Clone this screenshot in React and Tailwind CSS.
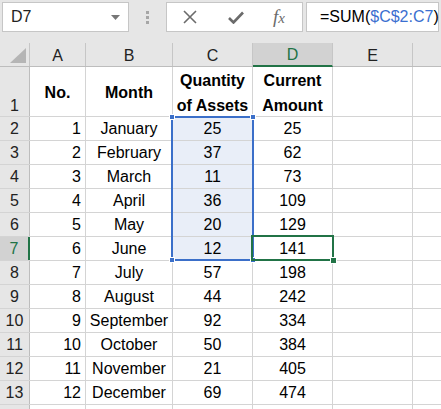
import React from "react";

const rows = [
  [1, "January", 25, 25],
  [2, "February", 37, 62],
  [3, "March", 11, 73],
  [4, "April", 36, 109],
  [5, "May", 20, 129],
  [6, "June", 12, 141],
  [7, "July", 57, 198],
  [8, "August", 44, 242],
  [9, "September", 92, 334],
  [10, "October", 50, 384],
  [11, "November", 21, 405],
  [12, "December", 69, 474],
];

const font = { fontFamily: '"Liberation Sans", Arial, sans-serif' };

function Handle({ className }) {
  return <div className={`absolute w-[6px] h-[6px] bg-[#3b6fc9] border border-white ${className}`} />;
}

export default function App() {
  return (
    <div className="w-[441px] h-[409px] overflow-hidden bg-white text-black" style={font}>
      {/* formula bar */}
      <div className="h-[43px] bg-[#e6e6e6] flex items-start pt-[2px] pl-[2px]">
        <div className="w-[127px] h-[30px] bg-white border border-[#c6c6c6] flex items-center justify-between pl-[8px] pr-[8px] text-[16px] text-[#222]">
          <span>D7</span>
          <svg width="9" height="5" viewBox="0 0 9 5">
            <path d="M0 0 H9 L4.5 5 Z" fill="#777" />
          </svg>
        </div>
        <div className="w-[37px] h-[30px] flex flex-col items-center justify-center gap-[2px]">
          <div className="w-[3px] h-[3px] bg-[#a6a6a6]" />
          <div className="w-[3px] h-[3px] bg-[#a6a6a6]" />
          <div className="w-[3px] h-[3px] bg-[#a6a6a6]" />
        </div>
        <div className="w-[137px] h-[30px] bg-white border border-[#c6c6c6] flex items-center">
          <div className="w-[46px] flex justify-center">
            <svg width="14" height="14" viewBox="0 0 14 14">
              <path d="M1 1 L13 13 M13 1 L1 13" stroke="#6b6b6b" strokeWidth="1.6" />
            </svg>
          </div>
          <div className="w-[46px] flex justify-center">
            <svg width="16" height="13" viewBox="0 0 16 13">
              <path d="M1 7 L5.5 11.5 L15 1.5" stroke="#6b6b6b" strokeWidth="2.6" fill="none" />
            </svg>
          </div>
          <div className="w-[40px] flex justify-center">
            <span className="italic text-[19px] text-[#6b6b6b]" style={{ fontFamily: '"Liberation Serif", serif' }}>
              f<span className="text-[15px]">x</span>
            </span>
          </div>
        </div>
        <div className="ml-[3px] w-[133px] h-[30px] bg-white border border-[#c6c6c6] flex items-center pl-[13px] text-[16px] whitespace-nowrap">
          <span>=SUM(</span>
          <span className="text-[#3b6fd0]">$C$2:C7</span>
          <span>)</span>
        </div>
      </div>

      {/* sheet */}
      <div className="relative">
        {/* column headers */}
        <div className="flex h-[24px] bg-[#e6e6e6] border-b border-[#bdbdbd] text-[16px] text-[#222]">
          <div className="w-[30px] border-r border-[#c6c6c6] relative">
            <svg className="absolute left-[10px] top-[5px]" width="16" height="15" viewBox="0 0 16 15">
              <path d="M16 0 V15 H0 Z" fill="#b5b5b5" />
            </svg>
          </div>
          <div className="w-[56px] border-r border-[#c6c6c6] flex items-center justify-center pt-[2px]">A</div>
          <div className="w-[87px] border-r border-[#c6c6c6] flex items-center justify-center pt-[2px]">B</div>
          <div className="w-[80px] border-r border-[#c6c6c6] flex items-center justify-center pt-[2px]">C</div>
          <div className="w-[80px] border-r border-[#c6c6c6] bg-[#d2d2d2] border-b-2 border-b-[#217346] -mb-px flex items-center justify-center pt-[2px] text-[#217346]">D</div>
          <div className="w-[80px] border-r border-[#c6c6c6] flex items-center justify-center pt-[2px]">E</div>
          <div className="flex-1" />
        </div>

        {/* row 1 */}
        <div className="flex h-[50px] border-b border-[#d4d4d4] text-[16px] font-bold">
          <div className="w-[30px] bg-[#e6e6e6] border-r border-[#bdbdbd] flex items-end justify-center pb-[2px] leading-[16px] font-normal text-[#222]">1</div>
          <div className="w-[56px] border-r border-[#d4d4d4] flex items-center justify-center pt-[2px]">No.</div>
          <div className="w-[87px] border-r border-[#d4d4d4] flex items-center justify-center pt-[2px]">Month</div>
          <div className="w-[80px] border-r border-[#d4d4d4] flex flex-col items-center justify-center pt-[3px] leading-[25px]">
            <span>Quantity</span>
            <span>of Assets</span>
          </div>
          <div className="w-[80px] border-r border-[#d4d4d4] flex flex-col items-center justify-center pt-[3px] leading-[25px]">
            <span>Current</span>
            <span>Amount</span>
          </div>
          <div className="w-[80px] border-r border-[#d4d4d4]" />
          <div className="flex-1" />
        </div>

        {rows.map((r, i) => {
          const active = i === 5;
          const inRange = i < 6;
          return (
            <div key={i} className="flex h-[24px] border-b border-[#d4d4d4] text-[16px]">
              <div
                className={`w-[30px] border-r flex items-center justify-center pt-px ${
                  active
                    ? "bg-[#d2d2d2] border-r-2 border-[#217346] text-[#217346]"
                    : "bg-[#e6e6e6] border-[#bdbdbd] text-[#222]"
                }`}
              >
                {i + 2}
              </div>
              <div className="w-[56px] border-r border-[#d4d4d4] flex items-center justify-end pr-[4px] pt-px">{r[0]}</div>
              <div className="w-[87px] border-r border-[#d4d4d4] flex items-center justify-center pt-px">{r[1]}</div>
              <div className={`w-[80px] border-r border-[#d4d4d4] flex items-center justify-center pt-px ${inRange ? "bg-[#e9eef8]" : ""}`}>{r[2]}</div>
              <div className="w-[80px] border-r border-[#d4d4d4] flex items-center justify-center pt-px">{r[3]}</div>
              <div className="w-[80px] border-r border-[#d4d4d4]" />
              <div className="flex-1" />
            </div>
          );
        })}

        {/* row 14 (partial) */}
        <div className="flex h-[24px]">
          <div className="w-[30px] bg-[#e6e6e6] border-r border-[#bdbdbd]" />
          <div className="w-[56px] border-r border-[#d4d4d4]" />
          <div className="w-[87px] border-r border-[#d4d4d4]" />
          <div className="w-[80px] border-r border-[#d4d4d4]" />
          <div className="w-[80px] border-r border-[#d4d4d4]" />
          <div className="w-[80px] border-r border-[#d4d4d4]" />
        </div>

        {/* range C2:C7 */}
        <div className="absolute left-[171px] top-[73px] w-[83px] h-[145px] border-2 border-[#3b6fc9] pointer-events-none" />
        <Handle className="left-[169px] top-[71px]" />
        <Handle className="left-[250px] top-[71px]" />
        <Handle className="left-[169px] top-[214px]" />
        <Handle className="left-[250px] top-[214px]" />

        {/* active cell D7 */}
        <div className="absolute left-[251px] top-[192px] w-[83px] h-[26px] border-2 border-[#217346] pointer-events-none" />
        <div className="absolute left-[330px] top-[214px] w-[7px] h-[7px] bg-[#217346] border border-white" />
      </div>
    </div>
  );
}
